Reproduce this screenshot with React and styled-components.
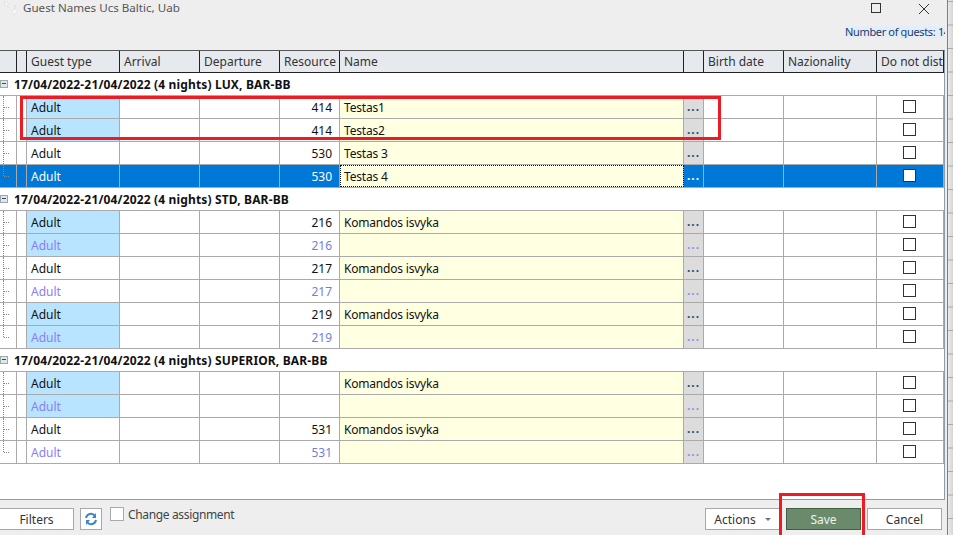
import React from "react";
import styled, { createGlobalStyle } from "styled-components";

const Global = createGlobalStyle`
  html, body { margin: 0; padding: 0; background: #eeeeee; }
  body { font-family: "Noto Sans", "Open Sans", sans-serif; font-size: 12px; color: #222; overflow: hidden; }
  * { box-sizing: border-box; }
`;

const COLS = "17px 10px 93px 80px 80px 60px 344px 20px 80px 93px 67px";

const Page = styled.div`
  position: relative;
  width: 953px;
  height: 535px;
  display: flex;
  overflow: hidden;
`;
const Win = styled.div`
  width: 948px;
  height: 535px;
  flex: none;
  display: flex;
  flex-direction: column;
  background: #eeeeee;
  border-right: 1px solid #5f84ad;
`;
const Backdrop = styled.div`
  width: 5px;
  height: 535px;
  flex: none;
  background:
    linear-gradient(transparent 0 22.5px, #a9a9a9 22.5px 23.5px) 0 2px / 100% 23.5px repeat-y,
    linear-gradient(90deg, #ececec, #d4d4d4);
`;
const TitleBar = styled.div`
  height: 50px;
  flex: none;
  display: flex;
  flex-direction: column;
  padding-left: 3px;
`;
const TitleRow = styled.div`
  height: 21px;
  display: flex;
  align-items: flex-start;
  gap: 4px;
`;
const Title = styled.span`
  font-size: 11.6px;
  line-height: 16px;
  color: #555;
  flex: 1;
`;
const MaxBtn = styled.svg`
  width: 14px;
  height: 14px;
  margin-top: 1px;
  margin-right: 30px;
  display: block;
`;
const CloseBtn = styled.svg`
  width: 14px;
  height: 14px;
  margin-top: 2px;
  margin-right: 16px;
  display: block;
`;
const Guests = styled.div`
  align-self: flex-end;
  width: 100px;
  height: 12px;
  margin: 5px 2px 0 0;
  overflow: hidden;
  white-space: nowrap;
  font-size: 11px;
  letter-spacing: -0.35px;
  line-height: 12px;
  color: #1a3a6e;
  background: #e4eefb;
`;
const Grid = styled.div`
  flex: 1;
  width: 945px;
  background: #fff;
  border-top: 1px solid #555;
  border-right: 1px solid #8c9cab;
  border-bottom: 1px solid #8c9cab;
  overflow: hidden;
`;
const Head = styled.div`
  display: grid;
  grid-template-columns: ${COLS};
  height: 22px;
  background: #e6e9ed;
  border-bottom: 1px solid #222;
`;
const HeadCell = styled.div`
  border-right: 1px solid #222;
  padding-left: 4px;
  line-height: 21px;
  font-size: 12px;
  color: #333;
  white-space: nowrap;
  overflow: hidden;
`;
const Group = styled.div`
  height: 23px;
  display: flex;
  align-items: center;
  gap: 6px;
  border-bottom: 1px solid #aaa;
  font-size: 12px;
  font-weight: 700;
  letter-spacing: 0.15px;
  color: #111;
`;
const Toggle = styled.span`
  width: 8px;
  height: 8px;
  border: 1px solid #9aa;
  background: #dfe6ee;
  position: relative;
  flex: none;
  &::after {
    content: "";
    position: absolute;
    left: 1px; right: 1px; top: 2px;
    height: 1px;
    background: #446;
  }
`;
const Row = styled.div`
  display: grid;
  grid-template-columns: ${COLS};
  height: 23px;
  border-bottom: 1px solid #aaa;
  background: ${p => (p.$sel ? "#0078d7" : "#fff")};
  color: ${p => (p.$sel ? "#fff" : p.$ghost ? "#8b7dfa" : "#111")};
`;
const Cell = styled.div`
  border-right: 1px solid #aaa;
  padding: 0 4px;
  line-height: 24px;
  font-size: 12px;
  white-space: nowrap;
  overflow: hidden;
  text-align: ${p => (p.$right ? "right" : "left")};
  background: ${p => p.$bg || "transparent"};
`;
const ResCell = styled(Cell)`
  padding-right: 7px;
  color: ${p => (p.$ghost ? "#6f7fd8" : "inherit")};
`;
const Tree = styled.div`
  border-right: 1px solid #aaa;
  position: relative;
  &::before {
    content: "";
    position: absolute;
    left: 3px; top: 0;
    bottom: ${p => (p.$last ? "11px" : "0")};
    border-left: 1px dotted #888;
  }
  &::after {
    content: "";
    position: absolute;
    left: 4px; top: 11px; width: 5px;
    border-top: 1px dotted #888;
  }
`;
const NameCell = styled(Cell)`
  background: #ffffe1;
  color: #111;
  letter-spacing: -0.2px;
  outline: ${p => (p.$sel ? "1px dotted #111" : "none")};
  outline-offset: -1px;
`;
const Dots = styled.div`
  border-right: 1px solid #aaa;
  background: ${p => (p.$sel ? "#0078d7" : "#dcdcdc")};
  color: ${p => (p.$sel ? "#fff" : p.$ghost ? "#8b93ee" : "#1d4f80")};
  font-weight: 700;
  font-size: 12px;
  line-height: 22px;
  text-align: center;
  letter-spacing: 1px;
  overflow: hidden;
`;
const CheckCell = styled.div`
  border-right: 1px solid #aaa;
  display: flex;
  justify-content: center;
  padding-top: 4px;
`;
const Check = styled.span`
  width: 13px;
  height: 13px;
  margin-right: 1px;
  border: 1px solid #333;
  background: #fff;
  display: block;
`;
const Footer = styled.div`
  height: 35px;
  flex: none;
  display: flex;
  align-items: flex-start;
  padding: 8px 5px 0 0;
  font-size: 12px;
`;
const Btn = styled.button`
  width: ${p => p.$w}px;
  height: 22px;
  margin-left: ${p => p.$ml || 0}px;
  border: 1px solid ${p => (p.$primary ? "#3f5f43" : "#a8a8a8")};
  background: ${p => (p.$primary ? "#6b8a6c" : "#fff")};
  color: ${p => (p.$primary ? "#eef3ee" : "#333")};
  font: 12px "Noto Sans", "Open Sans", sans-serif;
  padding: 0;
  display: flex;
  align-items: center;
  justify-content: center;
  gap: 9px;
`;
const FiltersBtn = styled(Btn)`
  border-left: none;
`;
const Assign = styled.label`
  margin-left: 8px;
  margin-top: -1px;
  display: flex;
  align-items: flex-start;
  gap: 4px;
  color: #444;
  line-height: 15px;
  letter-spacing: -0.35px;
`;
const AssignBox = styled.span`
  width: 14px;
  height: 14px;
  background: #fff;
  border: 1px solid #aaa;
  display: block;
`;
const Spacer = styled.div`
  flex: 1;
`;
const Caret = styled.span`
  width: 0;
  height: 0;
  border-left: 3px solid transparent;
  border-right: 3px solid transparent;
  border-top: 3px solid #777;
`;
const Mark = styled.div`
  position: absolute;
  left: ${p => p.$x}px;
  top: ${p => p.$y}px;
  width: ${p => p.$w}px;
  height: ${p => p.$h}px;
  border: 3px solid #ed1c24;
  border-bottom-width: ${p => (p.$open ? 0 : 3)}px;
  pointer-events: none;
`;

const groups = [
  { label: "17/04/2022-21/04/2022 (4 nights) LUX, BAR-BB", rows: [
    { blue: 1, res: "414", name: "Testas1" },
    { blue: 1, res: "414", name: "Testas2" },
    { res: "530", name: "Testas 3" },
    { res: "530", name: "Testas 4", sel: 1 },
  ]},
  { label: "17/04/2022-21/04/2022 (4 nights) STD, BAR-BB", rows: [
    { blue: 1, res: "216", name: "Komandos isvyka" },
    { blue: 1, ghost: 1, res: "216" },
    { res: "217", name: "Komandos isvyka" },
    { ghost: 1, res: "217" },
    { blue: 1, res: "219", name: "Komandos isvyka" },
    { blue: 1, ghost: 1, res: "219" },
  ]},
  { label: "17/04/2022-21/04/2022 (4 nights) SUPERIOR, BAR-BB", rows: [
    { blue: 1, res: "", name: "Komandos isvyka" },
    { blue: 1, ghost: 1, res: "" },
    { res: "531", name: "Komandos isvyka" },
    { ghost: 1, res: "531" },
  ]},
];

const heads = ["", "", "Guest type", "Arrival", "Departure", "Resource", "Name", "", "Birth date", "Nazionality", "Do not disturb"];

export default function App() {
  return (
    <Page>
      <Global />
      <Win>
        <TitleBar>
          <TitleRow>
            <svg width="16" height="16" viewBox="0 0 16 16" style={{ flex: "none" }}>
              <path d="M1 1l5 3-2 1 2 3-5-3 2-1zM12 5v4h3l-4 6-2-5h3z" fill="#fbfbfb" stroke="#d8d8d8" strokeWidth="0.5" />
            </svg>
            <Title>Guest Names Ucs Baltic, Uab</Title>
            <MaxBtn viewBox="0 0 14 14">
              <rect x="2.5" y="2.5" width="9" height="9" fill="none" stroke="#333" />
            </MaxBtn>
            <CloseBtn viewBox="0 0 14 14">
              <path d="M2 2l10 10M12 2L2 12" stroke="#333" fill="none" />
            </CloseBtn>
          </TitleRow>
          <Guests>Number of guests: 14</Guests>
        </TitleBar>
        <Grid>
          <Head>
            {heads.map((h, i) => <HeadCell key={i}>{h}</HeadCell>)}
          </Head>
          {groups.map(g => (
            <React.Fragment key={g.label}>
              <Group><Toggle />{g.label}</Group>
              {g.rows.map((r, i) => (
                <Row key={i} $sel={r.sel} $ghost={r.ghost}>
                  <Tree $last={i === g.rows.length - 1} />
                  <Cell />
                  <Cell $bg={r.blue ? "#b8e4ff" : undefined}>Adult</Cell>
                  <Cell />
                  <Cell />
                  <ResCell $right $ghost={r.ghost}>{r.res}</ResCell>
                  <NameCell $sel={r.sel}>{r.name}</NameCell>
                  <Dots $sel={r.sel} $ghost={r.ghost}>...</Dots>
                  <Cell />
                  <Cell />
                  <CheckCell><Check /></CheckCell>
                </Row>
              ))}
            </React.Fragment>
          ))}
        </Grid>
        <Footer>
          <FiltersBtn $w={74}>Filters</FiltersBtn>
          <Btn $w={22} $ml={6} aria-label="Refresh">
            <svg width="14" height="14" viewBox="0 0 14 14">
              <path d="M2 6a5 5 0 0 1 9-2M12 8a5 5 0 0 1-9 2" fill="none" stroke="#3f86c6" strokeWidth="2" />
              <path d="M12 1v5H8zM2 13V8h4z" fill="#3f86c6" />
            </svg>
          </Btn>
          <Assign><AssignBox />Change assignment</Assign>
          <Spacer />
          <Btn $w={75}>Actions<Caret /></Btn>
          <Btn $w={75} $ml={6} $primary>Save</Btn>
          <Btn $w={75} $ml={6}>Cancel</Btn>
        </Footer>
      </Win>
      <Backdrop />
      <Mark $x={20} $y={96} $w={701} $h={44} />
      <Mark $x={779} $y={493} $w={86} $h={42} $open />
    </Page>
  );
}
